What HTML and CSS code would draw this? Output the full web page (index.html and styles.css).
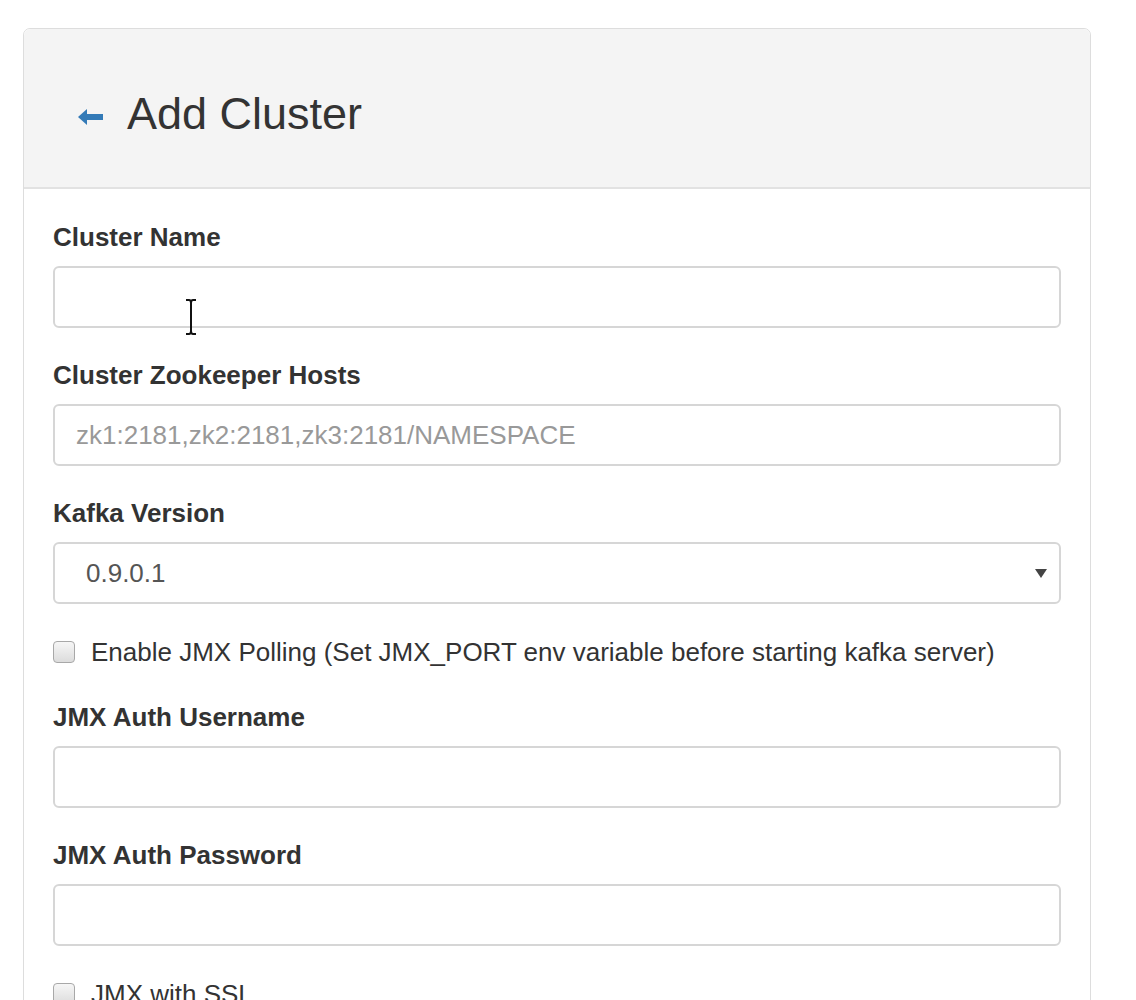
FILE: index.html
```html
<!DOCTYPE html>
<html>
<head>
<meta charset="utf-8">
<link rel="stylesheet" href="styles.css">
</head>
<body>
<div class="page">
  <div class="panel">
    <div class="panel-heading">
      <h1 class="title">
        <svg class="back" width="26" height="16" viewBox="0 0 26 16"><path d="M0 8 L9 0 L9 5 L25 5 L25 11 L9 11 L9 16 Z" fill="#337ab7"/></svg>
        <span>Add Cluster</span>
      </h1>
    </div>
    <div class="panel-body">
      <div class="group">
        <label class="lbl">Cluster Name</label>
        <div class="input-wrap">
          <input class="field" type="text">
          <svg class="ibeam" width="14" height="36" viewBox="0 0 14 36"><path d="M2 1 H5 Q7 1 7 4 V32 Q7 35 5 35 H2 M12 1 H9 Q7 1 7 4 M7 32 Q7 35 9 35 H12" stroke="#111" stroke-width="2" fill="none"/></svg>
        </div>
      </div>
      <div class="group">
        <label class="lbl">Cluster Zookeeper Hosts</label>
        <input class="field" type="text" placeholder="zk1:2181,zk2:2181,zk3:2181/NAMESPACE">
      </div>
      <div class="group">
        <label class="lbl">Kafka Version</label>
        <div class="select">
          <span>0.9.0.1</span>
          <svg class="caret" width="12" height="9" viewBox="0 0 12 9"><path d="M0 0 H12 L6 9 Z" fill="#444"/></svg>
        </div>
      </div>
      <div class="check">
        <span class="box"></span>
        <span>Enable JMX Polling (Set JMX_PORT env variable before starting kafka server)</span>
      </div>
      <div class="group">
        <label class="lbl">JMX Auth Username</label>
        <input class="field" type="text">
      </div>
      <div class="group">
        <label class="lbl">JMX Auth Password</label>
        <input class="field" type="password">
      </div>
      <div class="check">
        <span class="box"></span>
        <span>JMX with SSL</span>
      </div>
    </div>
  </div>
</div>
</body>
</html>
```
FILE: styles.css
```css
* { box-sizing: border-box; }
html, body { margin: 0; padding: 0; background: #fff; }
body {
  font-family: "Liberation Sans", Arial, sans-serif;
  color: #333;
}
.page {
  padding: 28px 0 0 23px;
  width: 1091px;
}
.panel {
  border: 1px solid #dddddd;
  border-radius: 7px;
  background: #fff;
  height: 1100px;
}
.panel-heading {
  background: #f4f4f4;
  border-bottom: 2px solid #e2e2e2;
  border-radius: 7px 7px 0 0;
  height: 160px;
  display: flex;
  align-items: center;
  padding-left: 54px;
}
.title {
  margin: 0;
  font-weight: normal;
  font-size: 45px;
  display: flex;
  align-items: center;
  gap: 23px;
  padding-top: 12px;
}
.back { margin-top: 6px; }
.panel-body {
  padding: 34px 29px 0 29px;
}
.group { margin-bottom: 33px; }
.lbl {
  display: block;
  font-weight: bold;
  font-size: 26px;
  line-height: 28px;
  margin-bottom: 15px;
}
.input-wrap { position: relative; }
.field {
  display: block;
  width: 100%;
  height: 62px;
  border: 2px solid #d6d6d6;
  border-radius: 6px;
  padding: 0 21px;
  font-family: "Liberation Sans", Arial, sans-serif;
  font-size: 26px;
  color: #555;
  background: #fff;
  outline: none;
}
.field::placeholder { color: #999; }
.ibeam {
  position: absolute;
  left: 131px;
  top: 33px;
}
.select {
  height: 62px;
  border: 2px solid #d6d6d6;
  border-radius: 6px;
  display: flex;
  align-items: center;
  justify-content: space-between;
  padding: 0 12px 0 31px;
  font-size: 26px;
  color: #555;
}
.check {
  display: flex;
  align-items: center;
  gap: 16px;
  font-size: 26px;
  line-height: 30px;
  margin: 1px 0 36px 0;
}
.box {
  width: 22px;
  height: 22px;
  border: 1px solid #a8a8a8;
  border-radius: 4px;
  background: linear-gradient(#f6f6f6, #dcdcdc);
  flex: none;
}
```
